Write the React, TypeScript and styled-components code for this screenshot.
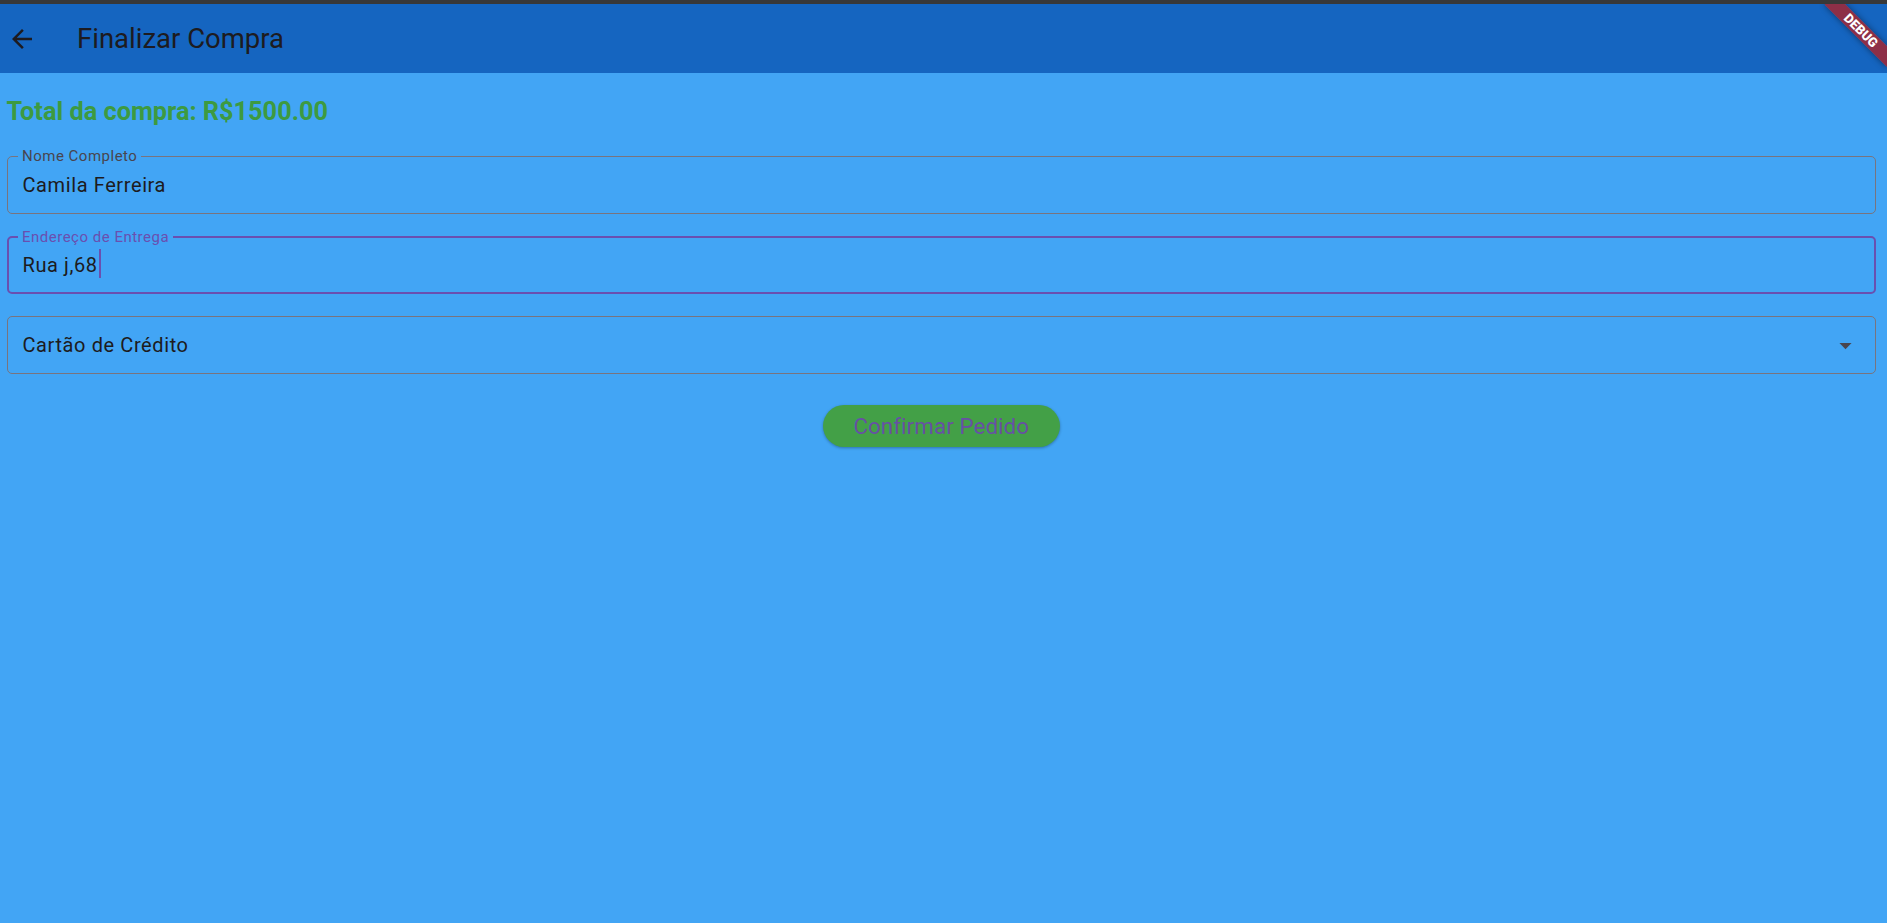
import React from "react";
import styled, { createGlobalStyle } from "styled-components";

const GlobalStyle = createGlobalStyle`
  html, body {
    margin: 0;
    padding: 0;
    background: #42a5f5;
    font-family: Roboto, "Noto Sans", "Liberation Sans", sans-serif;
  }
`;

const Screen = styled.div`
  min-height: 100vh;
  display: flex;
  flex-direction: column;
  background: #42a5f5;
`;

const WindowStrip = styled.div`
  height: 4px;
  background: #383838;
  flex-shrink: 0;
`;

const Frame = styled.div`
  position: relative;
  flex: 1;
  display: flex;
  flex-direction: column;
  overflow: hidden;
`;

const AppBar = styled.header`
  height: 69px;
  display: flex;
  align-items: center;
  gap: 40px;
  padding-left: 7px;
  background: #1565c0;
  color: #1d1b20;
`;

const BackButton = styled.button`
  display: flex;
  align-items: center;
  justify-content: center;
  width: 30px;
  height: 30px;
  padding: 0;
  border: none;
  background: none;
  color: #1d1b20;
  cursor: pointer;
`;

const Title = styled.h1`
  margin: 0;
  font-size: 27.5px;
  line-height: 32px;
  font-weight: 400;
  color: #1d1b20;
`;

const Body = styled.main`
  display: flex;
  flex-direction: column;
  padding: 23.5px 11px 0 6.5px;
`;

const Total = styled.div`
  font-size: 25.3px;
  line-height: 30px;
  font-weight: 700;
  color: #3d9a40;
`;

const Form = styled.div`
  display: flex;
  flex-direction: column;
  gap: 22px;
  margin-top: 29.5px;
`;

const Field = styled.div<{ $focused?: boolean }>`
  position: relative;
  box-sizing: border-box;
  height: 58px;
  display: flex;
  align-items: center;
  padding: 0 15px 0 ${(p) => (p.$focused ? 14 : 15)}px;
  border: ${(p) => (p.$focused ? "2px solid #6a4fb0" : "1px solid #79747e")};
  border-radius: 5px;
`;

const FieldLabel = styled.span<{ $focused?: boolean }>`
  position: absolute;
  top: -10px;
  left: ${(p) => (p.$focused ? 9.5 : 10.5)}px;
  padding: 0 4px;
  background: #42a5f5;
  font-size: 15px;
  line-height: 18px;
  letter-spacing: 0.5px;
  color: ${(p) => (p.$focused ? "#6a4fb0" : "#49454f")};
`;

const FieldValue = styled.span`
  font-size: 20px;
  line-height: 24px;
  letter-spacing: 0.6px;
  color: #1d1b20;
  white-space: nowrap;
`;

const Caret = styled.span`
  width: 2px;
  height: 29px;
  margin: -3px 0 0 1px;
  background: #6a4fb0;
`;

const DropArrow = styled.span`
  display: flex;
  margin-left: auto;
  color: #49454f;
`;

const Actions = styled.div`
  display: flex;
  justify-content: center;
  margin-top: 31px;
`;

const ConfirmButton = styled.button`
  width: 237px;
  height: 42px;
  border: none;
  border-radius: 21px;
  background: #43a047;
  color: #6750a4;
  font-family: Roboto, "Noto Sans", sans-serif;
  font-size: 22.3px;
  letter-spacing: 0.1px;
  box-shadow: 0 1px 3px rgba(0, 0, 0, 0.3);
  cursor: pointer;
`;

const BannerClip = styled.div`
  position: absolute;
  top: 0;
  right: 0;
  width: 90px;
  height: 90px;
  overflow: hidden;
  pointer-events: none;
`;

const Ribbon = styled.div`
  position: absolute;
  left: 19.5px;
  top: 19px;
  width: 88px;
  height: 15px;
  display: flex;
  align-items: center;
  justify-content: center;
  transform: rotate(45deg);
  background: rgba(183, 28, 28, 0.74);
  box-shadow: 0 0 6px rgba(0, 0, 0, 0.45);
  color: #fff;
  font-size: 13px;
  line-height: 15px;
  font-weight: 900;
`;

function ArrowBack() {
  return (
    <svg width="30" height="30" viewBox="0 0 24 24" fill="currentColor">
      <path d="M20 11H7.83l5.59-5.59L12 4l-8 8 8 8 1.41-1.41L7.83 13H20v-2z" />
    </svg>
  );
}

function ArrowDropDown() {
  return (
    <svg width="29" height="29" viewBox="0 0 24 24" fill="currentColor">
      <path d="M7 10l5 5 5-5z" />
    </svg>
  );
}

export default function App(): JSX.Element {
  return (
    <>
      <GlobalStyle />
      <Screen>
        <WindowStrip />
        <Frame>
          <AppBar>
            <BackButton aria-label="Voltar">
              <ArrowBack />
            </BackButton>
            <Title>Finalizar Compra</Title>
          </AppBar>

          <Body>
            <Total>Total da compra: R$1500.00</Total>

            <Form>
              <Field>
                <FieldLabel>Nome Completo</FieldLabel>
                <FieldValue>Camila Ferreira</FieldValue>
              </Field>

              <Field $focused>
                <FieldLabel $focused>Endereço de Entrega</FieldLabel>
                <FieldValue>Rua j,68</FieldValue>
                <Caret />
              </Field>

              <Field>
                <FieldValue>Cartão de Crédito</FieldValue>
                <DropArrow>
                  <ArrowDropDown />
                </DropArrow>
              </Field>
            </Form>

            <Actions>
              <ConfirmButton>Confirmar Pedido</ConfirmButton>
            </Actions>
          </Body>

          <BannerClip>
            <Ribbon>DEBUG</Ribbon>
          </BannerClip>
        </Frame>
      </Screen>
    </>
  );
}
